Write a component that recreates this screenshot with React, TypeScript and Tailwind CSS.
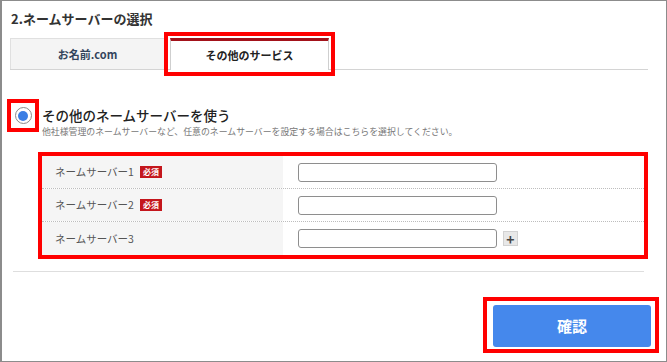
import React from 'react';

const font = { fontFamily: '"Noto Sans CJK JP", "Noto Sans", sans-serif' };

export default function App() {
  const rows = [
    { label: 'ネームサーバー1', required: true },
    { label: 'ネームサーバー2', required: true },
    { label: 'ネームサーバー3', required: false },
  ];

  return (
    <div
      className="w-[667px] h-[362px] bg-white border-t border-r border-b border-l-2 border-[#8c8c8c] text-[#333]"
      style={font}
    >
      <div className="pl-[9px] pt-[9px] text-[13px] leading-[18px] font-bold text-[#333]">2.ネームサーバーの選択</div>

      {/* tabs */}
      <div className="ml-[8px] mt-[10px] w-[638px] h-[32px] flex items-start gap-[5px] border-b border-[#d4d4d4]">
        <div className="w-[155px] h-[31px] bg-[#f4f4f4] border-t border-x border-[#e0e0e0] flex items-center justify-center text-[11px] font-bold text-[#33445c]">
          お名前.com
        </div>
        <div className="w-[159px] h-[32px] bg-white border-t-[3px] border-t-[#a3121a] border-x border-x-[#cfcfcf] flex items-center justify-center text-[11px] font-bold text-[#222] outline-4 outline-offset-[2px] outline-[#f00]">
          その他のサービス
        </div>
      </div>

      {/* radio option */}
      <div className="mt-[29px] ml-[5px] flex items-start">
        <div className="w-[32px] h-[33px] border-4 border-[#f00] flex items-center justify-center bg-white">
          <span className="w-[17px] h-[17px] rounded-full border border-[#8a8a8a] bg-white flex items-center justify-center">
            <span className="w-[10px] h-[10px] rounded-full bg-[#3b7ee4]" />
          </span>
        </div>
        <div className="ml-[3px] mt-[6px]">
          <div className="text-[13.5px] leading-[20px] font-medium text-[#222]">その他のネームサーバーを使う</div>
          <div className="text-[8.9px] leading-[13px] text-[#777]">
            他社様管理のネームサーバーなど、任意のネームサーバーを設定する場合はこちらを選択してください。
          </div>
        </div>
      </div>

      {/* name server table */}
      <div className="mt-[14px] ml-[36px] w-[610px] border-4 border-[#f00]">
        {rows.map((row, i) => (
          <div
            key={i}
            className={`flex h-[33px] ${i < rows.length - 1 ? 'border-b border-dotted border-[#bdbdbd]' : ''}`}
          >
            <div className="w-[241px] bg-[#f5f5f5] flex items-center pl-[13px] text-[10.5px] text-[#555]">
              <span>{row.label}</span>
              {row.required && (
                <span className="ml-[6px] px-[3px] h-[12px] leading-[12px] bg-[#c4161c] text-white text-[8px] font-bold">必須</span>
              )}
            </div>
            <div className="flex-1 flex items-center pl-[15px]">
              <div className="w-[199px] h-[19px] border border-[#8e8e8e] rounded-[3px] bg-white" />
              {!row.required && (
                <div className="ml-[6px] w-[15px] h-[15px] bg-[#e8e8e8] border border-[#d2d2d2] flex items-center justify-center text-[#444] text-[14px] font-bold leading-none">
                  +
                </div>
              )}
            </div>
          </div>
        ))}
      </div>

      <div className="mt-[12px] ml-[11px] w-[631px] h-px bg-[#dedede]" />

      {/* confirm */}
      <div className="mt-[25px] flex justify-end pr-[7px]">
        <div className="w-[176px] h-[56px] border-4 border-[#f00] pt-[4px] pl-[6px]">
          <button className="w-[158px] h-[42px] rounded-[3px] bg-[#4588ec] text-white text-[15px] font-bold">確認</button>
        </div>
      </div>
    </div>
  );
}
